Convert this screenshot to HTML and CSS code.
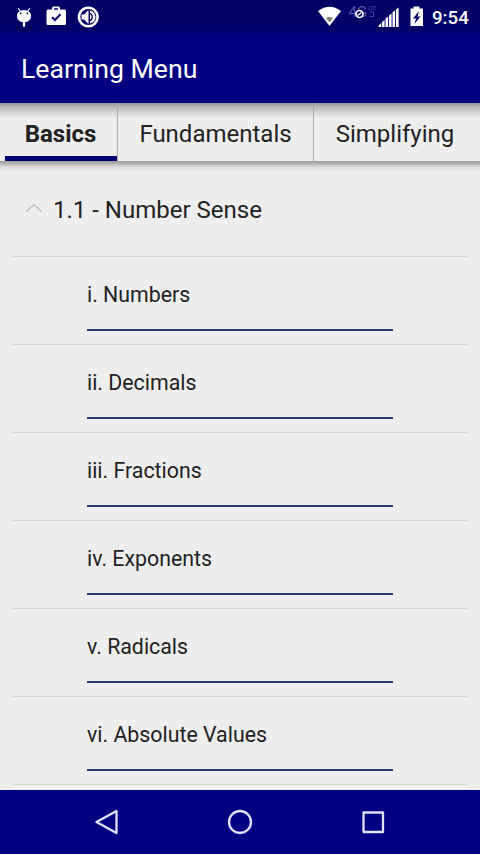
FILE: index.html
```html
<!DOCTYPE html>
<html lang="en">
<head>
<meta charset="utf-8">
<title>Learning Menu</title>
<link rel="stylesheet" href="styles.css">
</head>
<body>
<div class="status">
  <svg class="status-left" width="110" height="34" viewBox="0 0 110 34">
    <path d="M18 8l3 4M30 8l-3 4" stroke="#fff" stroke-width="1.1"/>
    <path d="M17 15.500a7 5.500 0 0 1 14 0q0 5-4.500 6.500h-1.300v3.800a1.200 1.200 0 0 1-2.400 0V22h-1.300Q17 20.500 17 15.500z" fill="#fff"/>
    <circle cx="20.600" cy="13.500" r=".9" fill="#000066"/><circle cx="27.400" cy="13.500" r=".9" fill="#000066"/>
    <path d="M48 9.500h4V8q0-1.500 1.500-1.500h5Q60 6.500 60 8v1.500h4.500q1.500 0 1.500 1.500v12.500q0 1.500-1.500 1.500H48q-1.500 0-1.500-1.500V11q0-1.500 1.500-1.500zM54 8.200v1.500h4V8.200z" fill="#fff" fill-rule="evenodd"/>
    <path d="M52 17.200l3 2.800 5.500-5.800" stroke="#000066" stroke-width="2" fill="none"/>
    <circle cx="88.300" cy="17" r="9.300" fill="none" stroke="#fff" stroke-width="2.600"/>
    <path d="M81.500 14.500h2.500l4.500-4.500v14l-4.500-4.500h-2.500z" fill="#fff"/>
    <path d="M90 10.500q5.500 1.500 5.500 6.500T90 23.500z" fill="#fff"/>
    <path d="M90 13.500q2.300 1 2.300 3.500T90 20.500" fill="none" stroke="#000066" stroke-width="1.400"/>
  </svg>
  <div class="status-right">
    <svg width="110" height="34" viewBox="0 0 110 34">
      <path d="M2 11q11.500-8.500 23 0L13.500 26z" fill="#fff"/>
      <path d="M10 18q3.500-2 7 0l-3.500 4.500z" fill="#85856f"/>
      <text class="net" x="32.500" y="17">4G</text>
      <text class="net-small" x="52" y="10">LTE</text>
      <path d="M53.500 12h4v4.500h-4" fill="none" stroke="#44448f" stroke-width="1"/>
      <circle cx="43.500" cy="14" r="3.500" fill="#000066" stroke="#fff" stroke-width="1.700"/>
      <path d="M41.500 15.500l4-3" stroke="#fff" stroke-width="1.400"/>
      <path d="M62.500 27v-1.500l2.800-2.500v4zM66 27v-5l2.600-2v7zM69.500 27v-8.500l2.600-2V27zM73 27V15.500l2.600-2V27zM76.500 27V12.200l2.600-2V27zM80 27V9.500l2.600-2V27z" fill="#fff"/>
      <path d="M94.500 8.500h3v-2h6v2h3.500v17.500H94.500z" fill="#fff"/>
      <path d="M103 11l-6 7.500h3l-1.500 5.500 6-7.500h-3z" fill="#000066"/>
    </svg>
    <span class="clock">9:54</span>
  </div>
</div>
<header class="appbar"><h1 class="title">Learning Menu</h1></header>
<nav class="tabs">
  <div class="tab tab-active">Basics</div>
  <div class="tab tab-mid">Fundamentals</div>
  <div class="tab tab-last">Simplifying</div>
</nav>
<main class="list">
  <div class="group">
    <svg class="chevron" width="18" height="10" viewBox="0 0 18 10"><path d="M1.500 8.500L9 1.500l7.500 7" fill="none" stroke="#ccc" stroke-width="1.900"/></svg>
    <span>1.1 - Number Sense</span>
  </div>
  <div class="row"><div class="item">i. Numbers</div></div>
  <div class="row"><div class="item">ii. Decimals</div></div>
  <div class="row"><div class="item">iii. Fractions</div></div>
  <div class="row"><div class="item">iv. Exponents</div></div>
  <div class="row"><div class="item">v. Radicals</div></div>
  <div class="row"><div class="item">vi. Absolute Values</div></div>
</main>
<footer class="navbar">
  <svg width="26" height="26" viewBox="0 0 26 26"><path d="M2.500 13L22.500 2v22z"/></svg>
  <svg width="26" height="26" viewBox="0 0 26 26"><circle cx="13" cy="13" r="11"/></svg>
  <svg width="26" height="26" viewBox="0 0 26 26"><rect x="3.500" y="3.500" width="19.500" height="19.500"/></svg>
</footer>
</body>
</html>
```
FILE: styles.css
```css
* { box-sizing: border-box; }
body {
  margin: 0;
  width: 480px;
  height: 854px;
  overflow: hidden;
  display: flex;
  flex-direction: column;
  background: #eee;
  color: #222;
  font-family: Roboto, sans-serif;
}
.status {
  height: 34px;
  flex: none;
  display: flex;
  justify-content: space-between;
  background: linear-gradient(#000066 31px, #000080);
}
.status-right { display: flex; }
.clock {
  width: 54px;
  padding-left: 6px;
  color: #fff;
  font-size: 18.700px;
  font-weight: 500;
  line-height: 36px;
}
.net { font-size: 15px; fill: #5555a0; }
.net-small { font-size: 5px; fill: #55a; }
.appbar {
  height: 69px;
  flex: none;
  padding-left: 21px;
  background: #000080;
}
.title {
  margin: 0;
  color: #fff;
  font-size: 26.670px;
  font-weight: 400;
  line-height: 70px;
}
.tabs {
  height: 58px;
  flex: none;
  display: flex;
  padding-left: 5px;
  background: linear-gradient(#999 0, #b8b8b8 4px, #d8d8d8 10px, #eee 16px);
}
.tab {
  font-size: 24px;
  line-height: 62px;
  text-align: center;
  white-space: nowrap;
}
.tab-active {
  width: 112px;
  padding-right: 1px;
  border-bottom: 5px solid #000073;
  font-weight: 700;
}
.tab-mid { width: 196px; border-left: 1px solid #aaa; }
.tab-last { flex: 1; padding-right: 4px; border-left: 1px solid #aaa; }
.list {
  height: 629px;
  flex: none;
  overflow: hidden;
  padding: 0 13px;
  background: linear-gradient(#999 0, #b8b8b8 3px, #ddd 6px, #eee 11px);
}
.group {
  height: 96px;
  display: flex;
  align-items: center;
  gap: 10px;
  padding: 3px 0 0 12px;
  border-bottom: 1px solid #d6d8d6;
  font-size: 24px;
}
.chevron { margin-top: -4px; }
.row {
  height: 88px;
  padding: 0 74px;
  border-bottom: 1px solid #d8d8d8;
}
.item {
  height: 74px;
  border-bottom: 2px solid #333377;
  font-size: 21.330px;
  line-height: 76px;
}
.navbar {
  height: 64px;
  flex: none;
  display: flex;
  justify-content: center;
  align-items: center;
  gap: 107px;
  background: #000080;
}
.navbar svg { fill: none; stroke: #e0e0ff; stroke-width: 2.300; stroke-linejoin: round; }
```
